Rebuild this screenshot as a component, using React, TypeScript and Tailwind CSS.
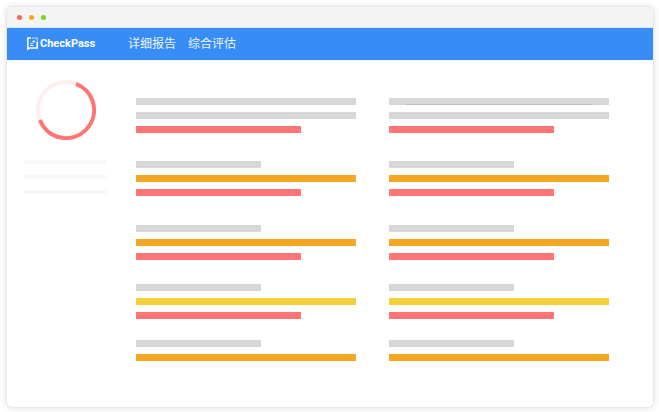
import clsx from 'clsx';

type Tone = 'gray' | 'orange' | 'yellow' | 'red';
type Size = 'full' | 'long' | 'short';

interface Bar {
  tone: Tone;
  size: Size;
}

interface Group {
  gap: string;
  bars: Bar[];
}

const TONES: Record<Tone, string> = {
  gray: 'bg-[#d7d7d7]',
  orange: 'bg-[#f6a623]',
  yellow: 'bg-[#f2d138]',
  red: 'bg-[#ff7575]',
};

const SIZES: Record<Size, string> = {
  full: 'w-full',
  long: 'w-3/4',
  short: 'w-[57%]',
};

const GROUPS: Group[] = [
  {
    gap: 'mt-0',
    bars: [
      { tone: 'gray', size: 'full' },
      { tone: 'gray', size: 'full' },
      { tone: 'red', size: 'long' },
    ],
  },
  {
    gap: 'mt-7',
    bars: [
      { tone: 'gray', size: 'short' },
      { tone: 'orange', size: 'full' },
      { tone: 'red', size: 'long' },
    ],
  },
  {
    gap: 'mt-[29px]',
    bars: [
      { tone: 'gray', size: 'short' },
      { tone: 'orange', size: 'full' },
      { tone: 'red', size: 'long' },
    ],
  },
  {
    gap: 'mt-6',
    bars: [
      { tone: 'gray', size: 'short' },
      { tone: 'yellow', size: 'full' },
      { tone: 'red', size: 'long' },
    ],
  },
  {
    gap: 'mt-[21px]',
    bars: [
      { tone: 'gray', size: 'short' },
      { tone: 'orange', size: 'full' },
    ],
  },
];

function Logo() {
  return (
    <svg width="11" height="14" viewBox="0 0 11 14" fill="none" stroke="#fff" aria-hidden="true">
      <path d="M4 1H.8v11.2l2-1.3h7.4V4.5" strokeWidth="1.5" />
      <path d="M5 1.2h5.2v2.6" strokeWidth="1.2" opacity="0.6" />
      <path d="M3 8.5h3.2M5.6 4.4h2.4" strokeWidth="1.2" />
      <path d="M3 6.4h2.6M4 7.2l3.4-2" strokeWidth="1" opacity="0.6" />
    </svg>
  );
}

function ScoreRing() {
  return (
    <svg className="mx-auto" width="60" height="60" viewBox="0 0 60 60" fill="none" aria-hidden="true">
      <circle cx="30" cy="30" r="28" stroke="#ffeeef" strokeWidth="4" />
      {/* red part runs clockwise from 21deg to 249deg */}
      <path d="M40 3.9A28 28 0 1 1 3.9 40" stroke="#ff7575" strokeWidth="4" />
    </svg>
  );
}

function BarColumn({ underlined = false }: { underlined?: boolean }) {
  return (
    <div>
      {GROUPS.map((group, i) => (
        <div key={i} className={clsx('flex flex-col gap-[7px]', group.gap)}>
          {group.bars.map((bar, j) => (
            <div key={j} className={clsx('flex h-[7px] items-end justify-center', TONES[bar.tone], SIZES[bar.size])}>
              {underlined && i === 0 && j === 0 && <div className="h-px w-[85%] bg-[#c2c0c0]" />}
            </div>
          ))}
        </div>
      ))}
    </div>
  );
}

export default function App() {
  return (
    <div className="flex min-h-screen flex-col bg-white pt-[7px] pr-[6px] pb-[5px] pl-[7px] font-['Liberation_Sans','Noto_Sans_CJK_SC',sans-serif]">
      <div className="flex flex-1 flex-col overflow-hidden rounded-[5px] bg-white shadow-[0_0_0_1px_#e8e8e8,0_0_6px_1px_rgba(0,0,0,0.12)]">
        {/* Window title bar */}
        <div className="flex h-[21px] items-center gap-[7px] border-b border-[#dce6f2] bg-[#f4f4f4] pl-[10px]">
          <span className="size-[5px] rounded-full bg-[#ff6259]" />
          <span className="size-[5px] rounded-full bg-[#f6a623]" />
          <span className="size-[5px] rounded-full bg-[#7ed321]" />
        </div>

        <header className="flex h-8 items-center bg-[#378df5] pl-5 text-white">
          <a href="#" className="flex w-[101px] items-center gap-[2px] text-[11px]/4 font-bold">
            <Logo />
            <span className="font-['Roboto',sans-serif]">CheckPass</span>
          </a>
          <nav className="flex gap-3 text-xs text-white/90">
            <a href="#detail">详细报告</a>
            <a href="#overall">综合评估</a>
          </nav>
        </header>

        <div className="flex flex-1">
          <aside className="w-[129px] shrink-0 pt-5 pl-[17px]">
            <div className="w-[83px]">
              <ScoreRing />
              <div className="mt-5 flex flex-col gap-[11px]">
                <div className="h-1 bg-[#f8f8f8]" />
                <div className="h-1 bg-[#f8f8f8]" />
                <div className="h-1 bg-[#f8f8f8]" />
              </div>
            </div>
          </aside>

          <main className="grid flex-1 grid-cols-2 gap-[33px] pt-[38px] pr-11 pb-11">
            <BarColumn />
            <BarColumn underlined />
          </main>
        </div>
      </div>
    </div>
  );
}
